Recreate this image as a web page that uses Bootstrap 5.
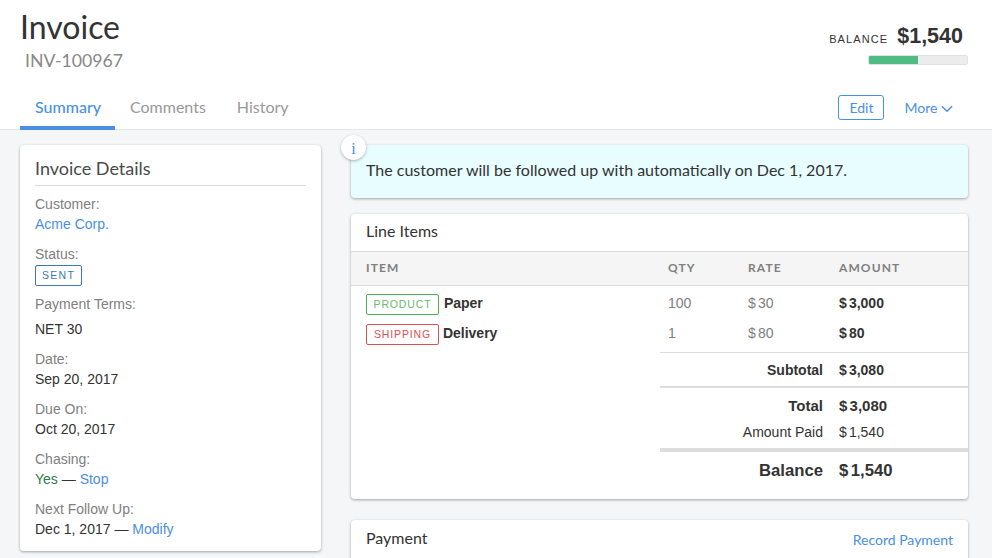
<!DOCTYPE html>
<html lang="en">
<head>
    <meta charset="UTF-8">
    <meta name="viewport" content="width=device-width, initial-scale=1.0">
    <link href="https://cdn.jsdelivr.net/npm/bootstrap@5.3.3/dist/css/bootstrap.min.css" rel="stylesheet">
    <title>Invoice</title>
    <style>
        html, body { height: 558px; overflow: hidden; }
        body { background: #f5f6f8; font-family: "Liberation Sans", Arial, sans-serif; font-size: 14px; color: #333; }
        a { color: #4a90e2; text-decoration: none; }

        .page-head { background: #fff; border-bottom: 1px solid #e6e6e6; height: 130px; padding: 0 24px 0 20px; }
        .head-top { height: 85px; }
        .inv-title { font-family: Lato, sans-serif; font-size: 32px; font-weight: 400; line-height: 40px; margin: 7px 0 0; color: #333; }
        .inv-number { font-family: Lato, sans-serif; font-size: 17.7px; line-height: 26px; color: #888; margin: 1px 0 0 5px; }
        .bal-box { width: 150px; margin-top: 22px; }
        .bal-label { font-size: 11px; letter-spacing: 1.1px; margin-right: 9px; }
        .bal-amount { font-size: 21.5px; font-weight: 700; line-height: 28px; margin-right: 5px; }
        .bal-bar { width: 100px; height: 10px; background: #ececec; border: 1px solid #e2e2e2; border-radius: 2px; margin: 5px 0 0 auto; overflow: hidden; }
        .bal-bar div { height: 100%; background: #50bc84; }

        .tab-row { height: 45px; }
        .tab-link { font-family: Lato, sans-serif; font-size: 16px; color: #999; padding: 0 15px; line-height: 44px; height: 45px; display: block; }
        .tab-link.on { color: #4a90e2; border-bottom: 4px solid #4a90e2; font-weight: 500; width: 95px; padding-right: 0; }
        .tab-link.wide { padding-right: 16px; }
        .edit-btn { font-family: Lato, sans-serif; font-size: 14px; color: #4a90e2; border: 1px solid #4a90e2; border-radius: 3px; line-height: 23px; padding: 0 10px; background: #fff; }
        .more-link { font-family: Lato, sans-serif; font-size: 14px; margin-left: 20px; margin-right: 15px; }

        .page-body { padding: 15px 24px 0 20px; gap: 30px; }
        .side-col { width: 301px; flex: none; }
        .main-col { width: 617px; flex: none; }
        .sheet { background: #fff; border-radius: 4px; box-shadow: 0 1px 3px rgba(0, 0, 0, .35); }

        .details { padding: 10px 15px 9px; height: 406px; }
        .details h5 { font-family: Lato, sans-serif; font-size: 18px; font-weight: 400; color: #4a4a4a; line-height: 26px; padding-bottom: 4px; border-bottom: 1px solid #ddd; margin: 0 0 8px; }
        .fld-label { color: #808080; line-height: 20px; }
        .fld-value { line-height: 20px; margin-bottom: 10px; }
        .fld-value.status-val { height: 22px; margin-bottom: 7px; }
        .fld-value.terms-val { margin-top: 5px; }
        .sent-tag { display: block; width: 47px; text-align: center; border: 1px solid #3b78b5; border-radius: 2px; color: #3b78b5; font-size: 10.5px; letter-spacing: 1.3px; line-height: 19px; margin-top: 1px; }
        .yes-text { color: #2f7d46; }

        .notice { background: #e7fdff; height: 53px; padding: 0 15px; font-family: Lato, sans-serif; font-size: 16px; line-height: 50px; margin-bottom: 16px; }
        .info-dot { position: absolute; left: -10px; top: -10px; width: 25px; height: 25px; background: #fff; border-radius: 50%; box-shadow: 0 1px 3px rgba(0, 0, 0, .3); color: #4a90e2; font-family: "Liberation Serif", serif; font-size: 16px; line-height: 27px; text-align: center; }

        .sheet-head { font-family: Lato, sans-serif; font-size: 16px; color: #333; height: 37px; line-height: 33px; padding: 0 15px; }
        .items { width: 100%; border-collapse: separate; border-spacing: 0; table-layout: fixed; }
        .items th { background: #f5f5f5; border-top: 1px solid #ddd; border-bottom: 1px solid #ddd; font-family: Lato, sans-serif; font-size: 12px; font-weight: 700; letter-spacing: 1.1px; color: #808080; height: 35px; padding: 0 8px 2px; }
        .items th:first-child, .items .first-cell { padding-left: 15px; }
        .items td { padding: 0 8px; }
        .row-one td { height: 32px; padding-top: 2px; }
        .row-two td { height: 34px; padding-bottom: 4px; }
        .row-one td.first-cell { padding-top: 4px; }
        .row-two td.first-cell { padding-top: 2px; }
        .col-item { width: 309px; }
        .col-qty { width: 80px; }
        .col-rate { width: 91px; }
        .gray-cell { color: #808080; }
        .cur { margin-right: .15em; }
        .line-tag { display: inline-block; width: 73px; border: 1px solid; border-radius: 2px; font-size: 10.5px; letter-spacing: .85px; line-height: 19px; text-align: center; vertical-align: middle; margin-right: 1px; }
        .tag-green { border-color: #4caf50; color: #6bb86f; }
        .tag-red { border-color: #e04f4f; color: #e04f4f; margin-right: 0; }
        .sum-lbl { text-align: right; }
        .row-sub td { height: 34px; padding-top: 1px; }
        .row-total td { height: 37px; padding-top: 1px; }
        .row-paid td { height: 25px; padding-bottom: 7px; line-height: 18px; }
        .row-bal td { height: 51px; padding-bottom: 9px; }
        .row-sub td.ruled { border-top: 1px solid #ddd; }
        .row-total td.ruled { border-top: 2px solid #ddd; }
        .row-bal td.ruled { border-top: 4px solid #ddd; }
        .big-sum { font-size: 15px; font-weight: 700; }
        .bigger-sum { font-size: 16.7px; font-weight: 700; }
        .payment-sheet { margin-top: 21px; height: 60px; }
        .payment-sheet .sheet-head { height: 35px; }
        .record-link { font-family: Lato, sans-serif; font-size: 14px; margin-top: 3px; }
    </style>
</head>
<body>
    <div class="page-head">
        <div class="head-top d-flex justify-content-between">
            <div>
                <h1 class="inv-title">Invoice</h1>
                <p class="inv-number">INV-100967</p>
            </div>
            <div class="bal-box">
                <div class="d-flex align-items-baseline justify-content-end">
                    <span class="bal-label">BALANCE</span>
                    <span class="bal-amount">$1,540</span>
                </div>
                <div class="bal-bar"><div style="width: 50%"></div></div>
            </div>
        </div>
        <div class="tab-row d-flex justify-content-between align-items-center">
            <div class="d-flex">
                <a class="tab-link on" href="#">Summary</a>
                <a class="tab-link wide" href="#">Comments</a>
                <a class="tab-link" href="#">History</a>
            </div>
            <div class="d-flex align-items-center">
                <button type="button" class="btn edit-btn">Edit</button>
                <a class="more-link" href="#">More
                    <svg width="12" height="8" viewBox="0 0 13 8" fill="none" stroke="#4a90e2" stroke-width="1.5"><path d="M1 1l5.5 5.5L12 1"/></svg>
                </a>
            </div>
        </div>
    </div>

    <div class="page-body d-flex align-items-start">
        <div class="side-col sheet details">
            <h5>Invoice Details</h5>
            <div class="fld-label">Customer:</div>
            <div class="fld-value"><a href="#">Acme Corp.</a></div>
            <div class="fld-label">Status:</div>
            <div class="fld-value status-val"><span class="sent-tag">SENT</span></div>
            <div class="fld-label">Payment Terms:</div>
            <div class="fld-value terms-val">NET 30</div>
            <div class="fld-label">Date:</div>
            <div class="fld-value">Sep 20, 2017</div>
            <div class="fld-label">Due On:</div>
            <div class="fld-value">Oct 20, 2017</div>
            <div class="fld-label">Chasing:</div>
            <div class="fld-value"><span class="yes-text">Yes</span> — <a href="#">Stop</a></div>
            <div class="fld-label">Next Follow Up:</div>
            <div class="fld-value">Dec 1, 2017 — <a href="#">Modify</a></div>
        </div>

        <div class="main-col">
            <div class="sheet notice position-relative">
                <span class="info-dot">i</span>
                The customer will be followed up with automatically on Dec 1, 2017.
            </div>

            <div class="sheet">
                <div class="sheet-head">Line Items</div>
                <table class="items">
                    <thead>
                        <tr>
                            <th class="col-item">ITEM</th>
                            <th class="col-qty">QTY</th>
                            <th class="col-rate">RATE</th>
                            <th>AMOUNT</th>
                        </tr>
                    </thead>
                    <tbody>
                        <tr class="row-one">
                            <td class="first-cell"><span class="line-tag tag-green">PRODUCT</span> <b>Paper</b></td>
                            <td class="gray-cell">100</td>
                            <td class="gray-cell"><span class="cur">$</span>30</td>
                            <td><b><span class="cur">$</span>3,000</b></td>
                        </tr>
                        <tr class="row-two">
                            <td class="first-cell"><span class="line-tag tag-red">SHIPPING</span> <b>Delivery</b></td>
                            <td class="gray-cell">1</td>
                            <td class="gray-cell"><span class="cur">$</span>80</td>
                            <td><b><span class="cur">$</span>80</b></td>
                        </tr>
                        <tr class="row-sub">
                            <td></td>
                            <td class="ruled sum-lbl" colspan="2"><b>Subtotal</b></td>
                            <td class="ruled"><b><span class="cur">$</span>3,080</b></td>
                        </tr>
                        <tr class="row-total">
                            <td></td>
                            <td class="ruled sum-lbl big-sum" colspan="2">Total</td>
                            <td class="ruled big-sum"><span class="cur">$</span>3,080</td>
                        </tr>
                        <tr class="row-paid">
                            <td></td>
                            <td class="sum-lbl" colspan="2">Amount Paid</td>
                            <td><span class="cur">$</span>1,540</td>
                        </tr>
                        <tr class="row-bal">
                            <td></td>
                            <td class="ruled sum-lbl bigger-sum" colspan="2">Balance</td>
                            <td class="ruled bigger-sum"><span class="cur">$</span>1,540</td>
                        </tr>
                    </tbody>
                </table>
            </div>

            <div class="sheet payment-sheet">
                <div class="sheet-head d-flex justify-content-between align-items-center">
                    <span>Payment</span>
                    <a class="record-link" href="#">Record Payment</a>
                </div>
            </div>
        </div>
    </div>
</body>
</html>
